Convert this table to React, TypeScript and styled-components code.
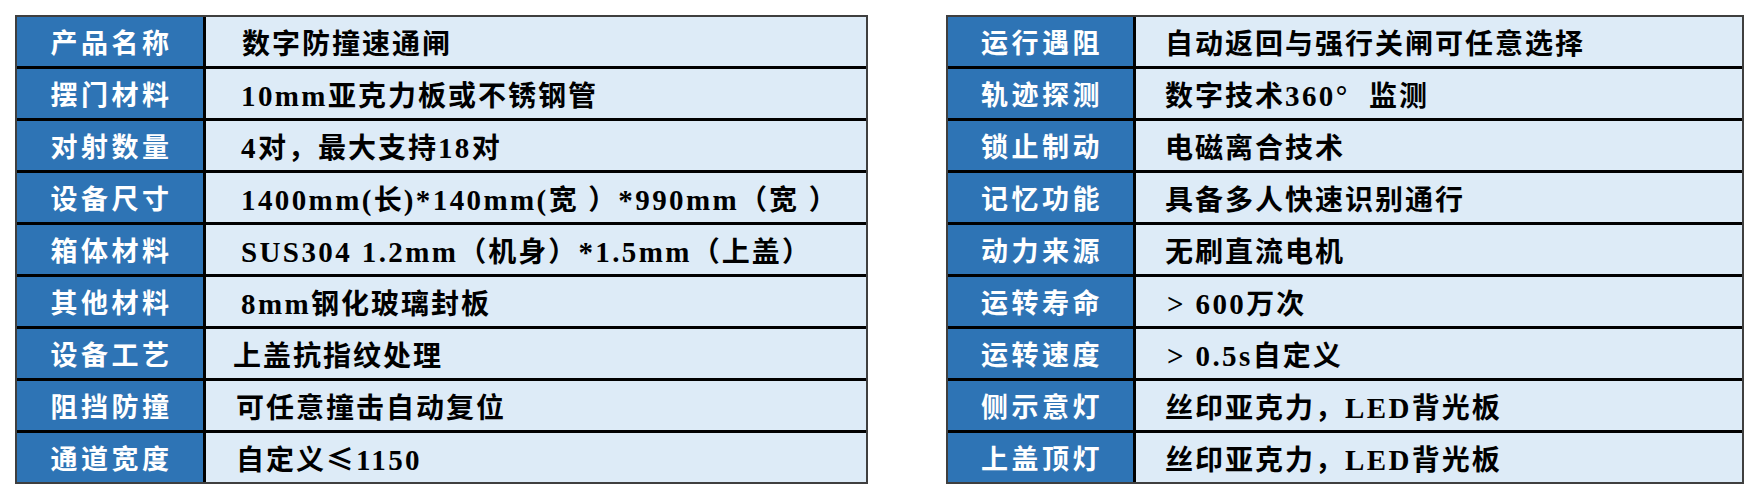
import React from "react";
import styled, { createGlobalStyle } from "styled-components";

interface SpecRow {
  label: string;
  value: string;
  indent?: number;
}

type RunKind = "latin" | "cjk" | "paren";

const leftRows: SpecRow[] = [
  { label: "产品名称", value: "数字防撞速通闸", indent: 9 },
  { label: "摆门材料", value: "10mm亚克力板或不锈钢管", indent: 8 },
  { label: "对射数量", value: "4对，最大支持18对", indent: 8 },
  { label: "设备尺寸", value: "1400mm(长)*140mm(宽 ）*990mm（宽 ）", indent: 8 },
  { label: "箱体材料", value: "SUS304 1.2mm（机身）*1.5mm（上盖）", indent: 8 },
  { label: "其他材料", value: "8mm钢化玻璃封板", indent: 8 },
  { label: "设备工艺", value: "上盖抗指纹处理" },
  { label: "阻挡防撞", value: "可任意撞击自动复位", indent: 3 },
  { label: "通道宽度", value: "自定义≤1150", indent: 3 },
];

const rightRows: SpecRow[] = [
  { label: "运行遇阻", value: "自动返回与强行关闸可任意选择", indent: 2 },
  { label: "轨迹探测", value: "数字技术360°  监测", indent: 2 },
  { label: "锁止制动", value: "电磁离合技术", indent: 2 },
  { label: "记忆功能", value: "具备多人快速识别通行", indent: 2 },
  { label: "动力来源", value: "无刷直流电机", indent: 2 },
  { label: "运转寿命", value: "> 600万次", indent: 4 },
  { label: "运转速度", value: "> 0.5s自定义", indent: 4 },
  { label: "侧示意灯", value: "丝印亚克力，LED背光板", indent: 2 },
  { label: "上盖顶灯", value: "丝印亚克力，LED背光板", indent: 2 },
];

const kindOf = (ch: string): RunKind => {
  if (ch === "（" || ch === "）") return "paren";
  return ch.charCodeAt(0) < 0x2000 ? "latin" : "cjk";
};

// split a value into runs so latin text and cjk text each get their own font
const splitRuns = (text: string) => {
  const runs: { kind: RunKind; text: string }[] = [];
  for (const ch of text) {
    const kind = kindOf(ch);
    const last = runs[runs.length - 1];
    if (last && last.kind === kind) last.text += ch;
    else runs.push({ kind, text: ch });
  }
  return runs;
};

const GlobalStyle = createGlobalStyle`
  html, body {
    margin: 0;
    padding: 0;
    background: #ffffff;
  }
`;

const Page = styled.div`
  display: flex;
  align-items: flex-start;
  gap: 78px;
  padding: 15px 0 0 15px;
  width: 1764px;
  height: 498px;
  box-sizing: border-box;
`;

const Table = styled.div<{ $width: number; $labelWidth: number }>`
  width: ${(p) => p.$width}px;
  box-sizing: border-box;
  border: 2px solid #3f3f3f;
  display: grid;
  grid-template-columns: ${(p) => p.$labelWidth}px 1fr;
  grid-auto-rows: 49px;
  gap: 3px;
  background: #000000;
`;

const Label = styled.div`
  display: flex;
  align-items: center;
  justify-content: center;
  background: #2e74b5;
  color: #ffffff;
  font-family: "Noto Sans CJK SC", "Noto Sans", sans-serif;
  font-weight: 700;
  font-size: 27px;
  letter-spacing: 3.5px;
  padding-left: 3px;
`;

const Value = styled.div<{ $indent: number }>`
  display: flex;
  align-items: center;
  background: #ddebf7;
  color: #000000;
  font-family: "Noto Sans CJK SC", "Liberation Serif", sans-serif;
  font-weight: 700;
  font-size: 28px;
  letter-spacing: 2px;
  white-space: pre;
  padding-left: ${(p) => 27 + p.$indent}px;
`;

const Latin = styled.span`
  font-family: "Liberation Serif", "Times New Roman", serif;
  font-size: 29px;
  letter-spacing: 2.4px;
`;

// centred full-width brackets, as in the source sheet
const Paren = styled.span`
  font-family: "Noto Sans CJK TC", "Noto Sans CJK SC", sans-serif;
`;

const SpecTable: React.FC<{ rows: SpecRow[]; width: number; labelWidth: number }> = ({
  rows,
  width,
  labelWidth,
}) => (
  <Table $width={width} $labelWidth={labelWidth}>
    {rows.map((row) => (
      <React.Fragment key={row.label}>
        <Label>{row.label}</Label>
        <Value $indent={row.indent ?? 0}>
          <span>
            {splitRuns(row.value).map((run, i) => {
              if (run.kind === "latin") return <Latin key={i}>{run.text}</Latin>;
              if (run.kind === "paren") return <Paren key={i}>{run.text}</Paren>;
              return <span key={i}>{run.text}</span>;
            })}
          </span>
        </Value>
      </React.Fragment>
    ))}
  </Table>
);

const App: React.FC = () => (
  <>
    <GlobalStyle />
    <Page>
      <SpecTable rows={leftRows} width={853} labelWidth={186} />
      <SpecTable rows={rightRows} width={798} labelWidth={185} />
    </Page>
  </>
);

export default App;
